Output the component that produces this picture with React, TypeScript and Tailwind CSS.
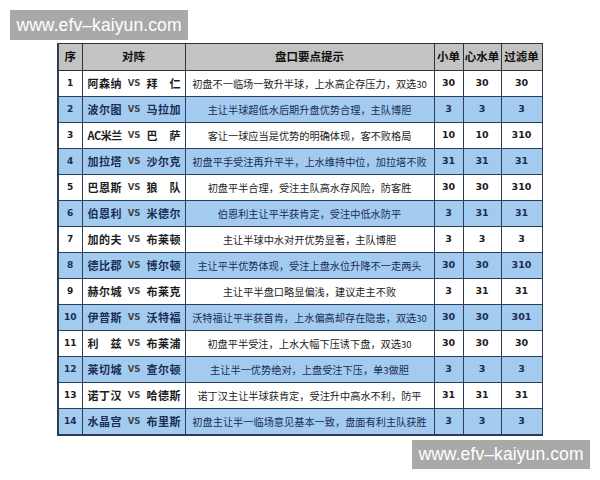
import React from 'react';

type Row = {
  no: number;
  home: string;
  away: string;
  tip: React.ReactNode;
  small: string;
  heart: string;
  filter: string;
};

const ROWS: Row[] = [
  { no: 1, home: '阿森纳', away: '拜仁', tip: <>初盘不一临场一致升半球，上水高企存压力，双选<span className="text-[9.5px]">30</span></>, small: '30', heart: '30', filter: '30' },
  { no: 2, home: '波尔图', away: '马拉加', tip: '主让半球超低水后期升盘优势合理，主队博胆', small: '3', heart: '3', filter: '3' },
  { no: 3, home: 'AC米兰', away: '巴萨', tip: '客让一球应当是优势的明确体现，客不败格局', small: '10', heart: '10', filter: '310' },
  { no: 4, home: '加拉塔', away: '沙尔克', tip: '初盘平手受注再升平半，上水维持中位，加拉塔不败', small: '31', heart: '31', filter: '31' },
  { no: 5, home: '巴恩斯', away: '狼队', tip: '初盘平半合理，受注主队高水存风险，防客胜', small: '30', heart: '30', filter: '310' },
  { no: 6, home: '伯恩利', away: '米德尔', tip: '伯恩利主让平半获肯定，受注中低水防平', small: '3', heart: '31', filter: '31' },
  { no: 7, home: '加的夫', away: '布莱顿', tip: '主让半球中水对开优势显著，主队博胆', small: '3', heart: '3', filter: '3' },
  { no: 8, home: '德比郡', away: '博尔顿', tip: '主让平半优势体现，受注上盘水位升降不一走两头', small: '30', heart: '30', filter: '310' },
  { no: 9, home: '赫尔城', away: '布莱克', tip: '主让平半盘口略显偏浅，建议走主不败', small: '3', heart: '31', filter: '31' },
  { no: 10, home: '伊普斯', away: '沃特福', tip: <>沃特福让平半获首肯，上水偏高却存在隐患，双选<span className="text-[9.5px]">30</span></>, small: '30', heart: '30', filter: '301' },
  { no: 11, home: '利兹', away: '布莱浦', tip: <>初盘平半受注，上水大幅下压诱下盘，双选<span className="text-[9.5px]">30</span></>, small: '30', heart: '30', filter: '30' },
  { no: 12, home: '莱切城', away: '查尔顿', tip: <>主让半一优势绝对，上盘受注下压，单<span className="text-[9.5px]">3</span>做胆</>, small: '3', heart: '3', filter: '3' },
  { no: 13, home: '诺丁汉', away: '哈德斯', tip: '诺丁汉主让半球获肯定，受注升中高水不利，防平', small: '31', heart: '31', filter: '31' },
  { no: 14, home: '水晶宫', away: '布里斯', tip: '初盘主让半一临场意见基本一致，盘面有利主队获胜', small: '3', heart: '3', filter: '3' },
];

const cjk = "font-['SimSun','Noto_Sans_CJK_SC',sans-serif]";
const num = "font-['DejaVu_Sans','Noto_Sans_CJK_SC',sans-serif]";

const Team: React.FC<{ name: string }> = ({ name }) => {
  // 2-char names are spread over the width of 3 chars
  if (/^[A-Z]/.test(name)) {
    return <span className="whitespace-nowrap tracking-[-0.5px]">{name}</span>;
  }
  return (
    <span className="flex w-[34px] justify-between whitespace-nowrap">
      {name.split('').map((c, i) => (
        <span key={i}>{c}</span>
      ))}
    </span>
  );
};

const Watermark: React.FC<{ className: string }> = ({ className }) => (
  <div
    className={`absolute flex items-center justify-center bg-[#a9a9a9] text-white font-['Liberation_Sans',sans-serif] text-[17.5px] tracking-[0.1px] ${className}`}
  >
    www.efv–kaiyun.com
  </div>
);

export default function App() {
  return (
    <div className="relative h-[480px] w-[600px] overflow-hidden bg-white">
      <div className="pl-[57px] pt-[43px]">
        <table className={`table-fixed border-collapse border-l-2 border-b-2 border-[#2c3d5a] ${cjk}`}>
          <colgroup>
            <col className="w-[24px]" />
            <col className="w-[103px]" />
            <col className="w-[249px]" />
            <col className="w-[29px]" />
            <col className="w-[38px]" />
            <col className="w-[41px]" />
          </colgroup>
          <thead>
            <tr className="h-[27px] bg-[#c3c3c3] text-[11.5px] font-bold text-[#111]">
              <th className="border border-[#333]">序</th>
              <th className="border border-[#333]">对阵</th>
              <th className="border border-[#333]">盘口要点提示</th>
              <th className="border border-[#333] px-0">小单</th>
              <th className="border border-[#333] px-0">心水单</th>
              <th className="border border-[#333] px-0">过滤单</th>
            </tr>
          </thead>
          <tbody>
            {ROWS.map(r => {
              const blue = r.no % 2 === 0;
              const text = blue ? 'text-[#1a2d52]' : 'text-[#1c1c1c]';
              return (
                <tr key={r.no} className={`h-[26px] ${blue ? 'bg-[#a3cbf0]' : 'bg-white'} ${text}`}>
                  <td className={`border border-[#2c3d5a] text-center text-[9px] font-bold ${num}`}>{r.no}</td>
                  <td className="border border-[#2c3d5a] p-0">
                    <div className="flex items-center justify-between pl-[5px] pr-[4px] text-[11px] font-bold">
                      <Team name={r.home} />
                      <span className={`text-[8.5px] font-bold text-[#444] ${num}`}>VS</span>
                      <Team name={r.away} />
                    </div>
                  </td>
                  <td className="border border-[#2c3d5a] p-0 text-center text-[10.2px] whitespace-nowrap">{r.tip}</td>
                  <td className={`border border-[#2c3d5a] text-center text-[9.5px] font-bold ${num}`}>{r.small}</td>
                  <td className={`border border-[#2c3d5a] text-center text-[9.5px] font-bold ${num}`}>{r.heart}</td>
                  <td className={`border border-[#2c3d5a] text-center text-[9.5px] font-bold ${num}`}>{r.filter}</td>
                </tr>
              );
            })}
          </tbody>
        </table>
      </div>
      <Watermark className="left-[10px] top-[10px] h-[30px] w-[178px]" />
      <Watermark className="left-[412px] top-[440px] h-[29px] w-[178px]" />
    </div>
  );
}
